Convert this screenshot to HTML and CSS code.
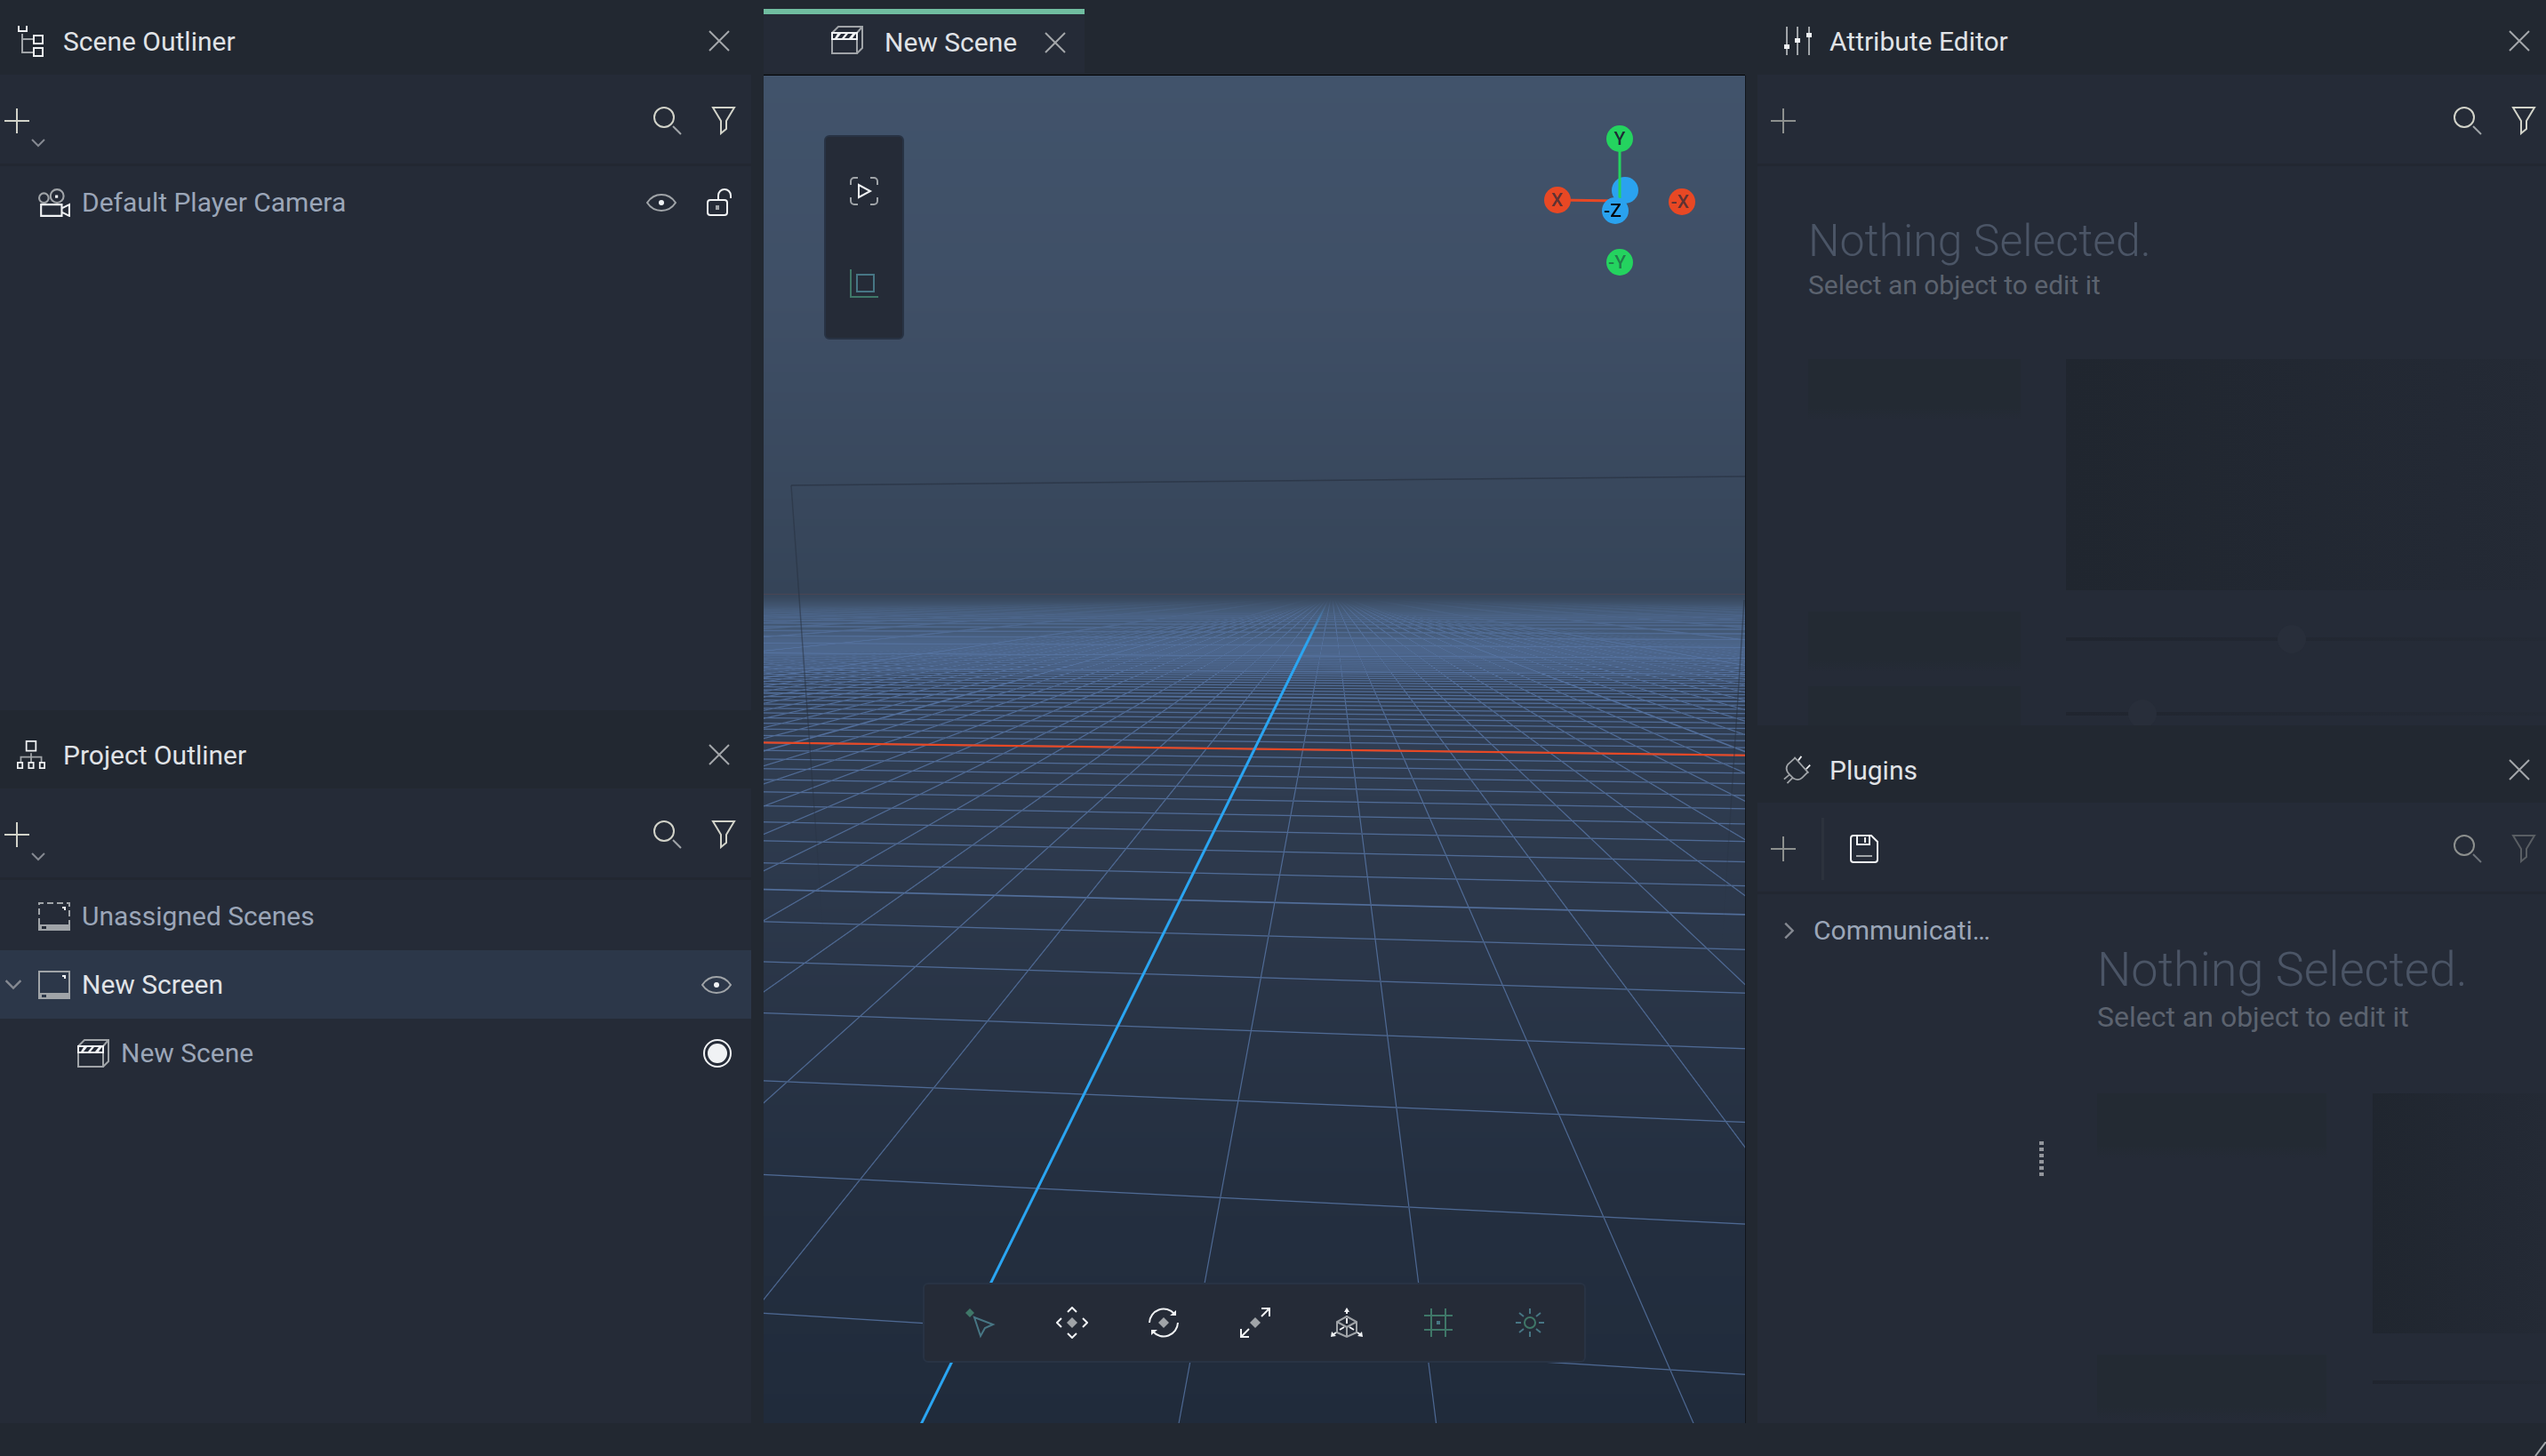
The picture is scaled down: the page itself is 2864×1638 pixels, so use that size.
FILE: index.html
```html
<!DOCTYPE html>
<html lang="en">
<head>
<meta charset="utf-8">
<title>Scene Editor</title>
<link rel="stylesheet" href="styles.css">
</head>
<body>
<svg class="sprite" aria-hidden="true">
  <symbol id="i-close" viewBox="0 0 24 24"><path d="M1 1 23 23M23 1 1 23"/></symbol>
  <symbol id="i-plus" viewBox="0 0 28 28"><path d="M14 0V28M0 14H28"/></symbol>
  <symbol id="i-caret" viewBox="0 0 16 10"><path d="M1 1 8 8 15 1"/></symbol>
  <symbol id="i-search" viewBox="0 0 32 32"><circle cx="12" cy="12" r="11"/><path class="dim" d="M22 22 31 31"/></symbol>
  <symbol id="i-filter" viewBox="0 0 28 32"><path d="M2 1H26L17 16V25L11 30V16Z"/></symbol>
  <symbol id="i-outliner" viewBox="0 0 32 36"><path d="M2 1V7H11V1M19 12H29V21H19ZM19 26H29V35H19Z"/><path class="dim" d="M6 10V31H18M6 16H18"/></symbol>
  <symbol id="i-project" viewBox="0 0 36 36"><path d="M12 1H24V13H12ZM1 28H7V35H1ZM15 28H21V35H15ZM29 28H35V35H29Z"/><path class="dim" d="M18 16V27M5 27V21H31V27"/></symbol>
  <symbol id="i-camera" viewBox="0 0 34 30"><path d="M3 17H25V29H3ZM25 21 33 17V29L25 25"/><g class="dim"><circle cx="6" cy="10" r="5"/><circle cx="20" cy="8" r="7"/></g><path class="solid" d="M18 7H21V10H18Z"/></symbol>
  <symbol id="i-eye" viewBox="0 0 36 20"><path class="dim" d="M2 10C6 4 12 1 18 1S30 4 34 10C30 16 24 19 18 19S6 16 2 10Z"/><circle class="solid" cx="18" cy="10" r="3"/></symbol>
  <symbol id="i-lock" viewBox="0 0 30 32"><rect x="2" y="13" width="22" height="17" rx="3"/><path d="M14 13V8A7 7 0 0 1 28 8V11"/><path class="solid dimfill" d="M11 19H15V24H11Z"/></symbol>
  <symbol id="i-unassigned" viewBox="0 0 36 32"><path class="dim" stroke-dasharray="7 4" d="M1 25V1H35V25"/><path class="solid dimfill" fill-rule="evenodd" d="M0 25H36V32H0ZM4 27V30H9V27Z"/><path d="M27 6H30V9"/></symbol>
  <symbol id="i-screen" viewBox="0 0 36 32"><path class="dim" d="M1 25V1H35V25"/><path class="solid dimfill" fill-rule="evenodd" d="M0 25H36V32H0ZM4 27V30H9V27Z"/><path d="M27 6H30V9"/></symbol>
  <symbol id="i-scene" viewBox="0 0 36 32"><g class="dim"><path d="M1 14V31H29V8M29 31 35 25V1H8L1 8M29 8 35 1"/></g><path class="solid" fill-rule="evenodd" d="M0 7H30V16H0ZM2 9V14H4L7 9ZM11 9 7 14H12L16 9ZM19 9 15 14H20L24 9ZM26 11 24 14H28V9Z"/></symbol>
  <symbol id="i-sliders" viewBox="0 0 32 32"><path class="dim" d="M4 0V32M16 0V32M29 0V32"/><path class="solid" d="M1 20H7V25H1ZM13 13H19V18H13ZM26 7H32V12H26Z"/></symbol>
  <symbol id="i-plug" viewBox="0 0 36 36"><path class="dim" d="M14 2 32 22M15 3 6 11C3 15 4 20 8 24L13 29C17 31 21 31 24 28L31 21M8 24 1 30M12 28 5 35"/><path d="M19 6 23 1M29 17 34 12"/></symbol>
  <symbol id="i-save" viewBox="0 0 32 32"><path d="M4 1H24L31 8V28A3 3 0 0 1 28 31H4A3 3 0 0 1 1 28V4A3 3 0 0 1 4 1ZM8 2V11H22V2M17 3V9"/><path class="dim" d="M7 24H25"/></symbol>
  <symbol id="i-frame" viewBox="0 0 32 32"><path class="dim" d="M1 9V5A4 4 0 0 1 5 1H9M23 1H27A4 4 0 0 1 31 5V9M31 23V27A4 4 0 0 1 27 31H23M9 31H5A4 4 0 0 1 1 27V23"/><path d="M10 9V23L23 16Z"/></symbol>
  <symbol id="i-bounds" viewBox="0 0 32 32"><path class="green" d="M1 0V31H32"/><path class="teal" d="M8 6H27V25H8Z"/></symbol>
  <symbol id="i-select" viewBox="0 0 36 36"><path class="greenfill" d="M6 2 11 7 6 12 1 7Z"/><path class="teal" d="M11 12 32 20 23 24 18 33Z"/></symbol>
  <symbol id="i-move" viewBox="0 0 36 36"><path d="M13 6 18 1 23 6M13 30 18 35 23 30M6 13 1 18 6 23M30 13 35 18 30 23"/><path class="solid dimfill" d="M18 12 24 18 18 24 12 18Z"/></symbol>
  <symbol id="i-rotate" viewBox="0 0 36 36"><path d="M2 18A16 16 0 0 1 30 8M34 18A16 16 0 0 1 6 28"/><path class="solid" d="M32 4V10H25ZM4 32V26H11Z"/><path class="solid dimfill" d="M18 12 24 18 18 24 12 18Z"/></symbol>
  <symbol id="i-scale" viewBox="0 0 36 36"><path d="M25 11 34 2M25 2H34V11M11 25 2 34M2 25V34H11"/><path class="solid dimfill" d="M18 12 24 18 18 24 12 18Z"/></symbol>
  <symbol id="i-local" viewBox="0 0 36 36"><path class="dim" d="M18 11 29 17V29L18 34 7 29V17ZM7 17 18 23 29 17M18 23V34"/><path d="M18 13V19M18 4V8M10 26 15 23M26 26 21 23M2 32 6 29M34 32 30 29"/><path class="solid" d="M18 1 21 6H15ZM0 34 1 28 6 33ZM36 34 35 28 30 33Z"/></symbol>
  <symbol id="i-grid" viewBox="0 0 32 32"><path class="green" d="M8 0V32M24 0V32M0 8H32M0 24H32"/><path class="tealfill" d="M14 14H18V18H14Z"/></symbol>
  <symbol id="i-light" viewBox="0 0 32 32"><circle class="green" cx="16" cy="16" r="6"/><path class="teal" d="M16 0V6M16 26V32M0 16H6M26 16H32M4 5 9 9M28 5 23 9M4 27 9 23M28 27 23 23"/></symbol>
</svg>

<main class="workspace">
  <div class="dock">
    <section class="panel scene-outliner">
      <header class="panel-head">
        <svg class="icon head-icon"><use href="#i-outliner"/></svg>
        <h2>Scene Outliner</h2>
        <button class="close" aria-label="Close Scene Outliner"><svg class="icon"><use href="#i-close"/></svg></button>
      </header>
      <div class="toolbar">
        <button class="add" aria-label="Add"><svg class="icon plus"><use href="#i-plus"/></svg><svg class="icon caret"><use href="#i-caret"/></svg></button>
        <button class="push" aria-label="Search"><svg class="icon i32"><use href="#i-search"/></svg></button>
        <button aria-label="Filter"><svg class="icon filter"><use href="#i-filter"/></svg></button>
      </div>
      <ul class="tree">
        <li class="row">
          <svg class="icon node"><use href="#i-camera"/></svg><span>Default Player Camera</span>
          <button class="push" aria-label="Toggle visibility"><svg class="icon eye"><use href="#i-eye"/></svg></button>
          <button aria-label="Lock"><svg class="icon lock"><use href="#i-lock"/></svg></button>
        </li>
      </ul>
    </section>
    <section class="panel project-outliner">
      <header class="panel-head">
        <svg class="icon head-icon"><use href="#i-project"/></svg>
        <h2>Project Outliner</h2>
        <button class="close" aria-label="Close Project Outliner"><svg class="icon"><use href="#i-close"/></svg></button>
      </header>
      <div class="toolbar">
        <button class="add" aria-label="Add"><svg class="icon plus"><use href="#i-plus"/></svg><svg class="icon caret"><use href="#i-caret"/></svg></button>
        <button class="push" aria-label="Search"><svg class="icon i32"><use href="#i-search"/></svg></button>
        <button aria-label="Filter"><svg class="icon filter"><use href="#i-filter"/></svg></button>
      </div>
      <ul class="tree">
        <li class="row"><svg class="icon node"><use href="#i-unassigned"/></svg><span>Unassigned Scenes</span></li>
        <li class="row selected">
          <button class="twisty" aria-label="Collapse"><svg class="icon dim"><use href="#i-caret"/></svg></button>
          <svg class="icon node"><use href="#i-screen"/></svg><span>New Screen</span>
          <button class="push" aria-label="Toggle visibility"><svg class="icon eye"><use href="#i-eye"/></svg></button>
        </li>
        <li class="row child">
          <svg class="icon node"><use href="#i-scene"/></svg><label for="active-scene">New Scene</label>
          <input class="push" type="radio" id="active-scene" name="active-scene" checked>
        </li>
      </ul>
    </section>
  </div>

  <section class="editor">
    <header class="tabs">
      <div class="tab">
        <svg class="icon scene"><use href="#i-scene"/></svg>
        <h2>New Scene</h2>
        <button class="close" aria-label="Close New Scene"><svg class="icon"><use href="#i-close"/></svg></button>
      </div>
    </header>
    <div class="viewport">
      <canvas id="grid"></canvas>
      <div class="tools view-tools">
        <button aria-label="Preview"><svg class="icon i32"><use href="#i-frame"/></svg></button>
        <button aria-label="Bounds"><svg class="icon i32"><use href="#i-bounds"/></svg></button>
      </div>
      <svg class="gizmo" viewBox="0 0 170 170" role="img" aria-label="Axis gizmo">
        <path d="M85 85 15 84" stroke="#e84824" stroke-width="3"/>
        <circle cx="91" cy="73" r="15" fill="#2aa2ef"/>
        <path d="M85 82V15" stroke="#24d35f" stroke-width="3"/>
        <g fill="#e84824"><circle cx="15" cy="84" r="15"/><circle cx="155" cy="86" r="15"/></g>
        <g fill="#24d35f"><circle cx="85" cy="15" r="15"/><circle cx="85" cy="154" r="15"/></g>
        <circle cx="80" cy="96" r="15" fill="#2aa2ef"/>
        <g class="axis-labels">
          <text x="15" y="91" fill="#5f3232">X</text><text x="153" y="93" fill="#5f3232">-X</text>
          <text x="85" y="22" fill="#1e2c35">Y</text><text x="82" y="161" fill="#217c4b">-Y</text>
          <text x="77" y="103" fill="#05080b">-Z</text>
        </g>
      </svg>
      <div class="tools edit-tools">
        <button aria-label="Select"><svg class="icon i36"><use href="#i-select"/></svg></button>
        <button aria-label="Move"><svg class="icon i36"><use href="#i-move"/></svg></button>
        <button aria-label="Rotate"><svg class="icon i36"><use href="#i-rotate"/></svg></button>
        <button aria-label="Scale"><svg class="icon i36"><use href="#i-scale"/></svg></button>
        <button aria-label="Local space"><svg class="icon i36"><use href="#i-local"/></svg></button>
        <button aria-label="Grid"><svg class="icon i32"><use href="#i-grid"/></svg></button>
        <button aria-label="Lighting"><svg class="icon i32"><use href="#i-light"/></svg></button>
      </div>
    </div>
  </section>

  <div class="dock right">
    <section class="panel attribute-editor">
      <header class="panel-head">
        <svg class="icon head-icon"><use href="#i-sliders"/></svg>
        <h2>Attribute Editor</h2>
        <button class="close" aria-label="Close Attribute Editor"><svg class="icon"><use href="#i-close"/></svg></button>
      </header>
      <div class="toolbar">
        <button disabled aria-label="Add"><svg class="icon plus"><use href="#i-plus"/></svg></button>
        <button class="push" aria-label="Search"><svg class="icon i32"><use href="#i-search"/></svg></button>
        <button aria-label="Filter"><svg class="icon filter"><use href="#i-filter"/></svg></button>
      </div>
      <div class="empty">
        <h3>Nothing Selected.</h3>
        <p>Select an object to edit it</p>
        <div class="ghost" aria-hidden="true">
          <i class="ghost-label"></i><i class="ghost-box"></i>
          <i class="ghost-label"></i><i class="ghost-track"><b style="left:44%"></b></i>
          <i class="ghost-label"></i><i class="ghost-track"><b style="left:13%"></b></i>
        </div>
      </div>
    </section>
    <section class="panel plugins">
      <header class="panel-head">
        <svg class="icon head-icon"><use href="#i-plug"/></svg>
        <h2>Plugins</h2>
        <button class="close" aria-label="Close Plugins"><svg class="icon"><use href="#i-close"/></svg></button>
      </header>
      <div class="toolbar">
        <button disabled aria-label="Add"><svg class="icon plus"><use href="#i-plus"/></svg></button>
        <span class="divider"></span>
        <button aria-label="Save"><svg class="icon i32 bright"><use href="#i-save"/></svg></button>
        <button class="push" disabled aria-label="Search"><svg class="icon i32"><use href="#i-search"/></svg></button>
        <button class="faint" disabled aria-label="Filter"><svg class="icon filter"><use href="#i-filter"/></svg></button>
      </div>
      <div class="split">
        <ul class="tree">
          <li class="row">
            <button class="twisty closed" aria-label="Expand"><svg class="icon"><use href="#i-caret"/></svg></button><span>Communicati…</span>
          </li>
        </ul>
        <div class="grip" role="separator" aria-orientation="vertical"></div>
        <div class="empty large">
          <h3>Nothing Selected.</h3>
          <p>Select an object to edit it</p>
          <div class="ghost" aria-hidden="true">
            <i class="ghost-label"></i><i class="ghost-box"></i>
            <i class="ghost-label"></i><i class="ghost-track"></i>
          </div>
        </div>
      </div>
    </section>
  </div>
</main>
<footer class="status"><svg class="corner" viewBox="0 0 16 16" aria-hidden="true"><path d="M4 16 16 0"/></svg></footer>
<script src="grid.js"></script>
</body>
</html>
```
FILE: styles.css
```css
:root {
  --bg: #222831;
  --panel: #252b37;
  --line: #222731;
  --text: #9ba6b8;
  --bright: #e0e3e7;
}
* { box-sizing: border-box; }
body {
  margin: 0;
  height: 100vh;
  display: flex;
  flex-direction: column;
  overflow: hidden;
  background: var(--bg);
  color: var(--text);
  font: 30px/40px Roboto, "Liberation Sans", sans-serif;
}
h2, h3, p, ul { margin: 0; padding: 0; font-weight: 400; font-size: inherit; }
ul { list-style: none; }
button { margin: 0; padding: 0; border: 0; background: none; color: inherit; display: flex; align-items: center; justify-content: center; flex: none; }
.sprite { position: absolute; width: 0; height: 0; }
.push { margin-left: auto; }

/* icons */
.icon { fill: none; stroke: #f0f2f4; stroke-width: 2; flex: none; display: block; overflow: visible; width: 24px; height: 24px; }
.dim { stroke: #a0a4a8; }
.solid { fill: #f0f2f4; stroke: none; }
.dimfill { fill: #a0a4a8; }
.green { stroke: #3f7768; }
.teal { stroke: #477684; }
.greenfill { fill: #3f7768; stroke: none; }
.tealfill { fill: #477684; stroke: none; }
.icon.i32 { width: 32px; height: 32px; }
.icon.i36 { width: 36px; height: 36px; }
.icon.plus { width: 28px; height: 28px; }
.icon.filter { width: 28px; height: 32px; }
.icon.eye { width: 36px; height: 20px; }
.icon.lock { width: 30px; height: 32px; }
.icon.scene { width: 36px; height: 32px; }

.workspace {
  flex: 1;
  min-height: 0;
  display: grid;
  grid-template-columns: minmax(0, 845fr) minmax(0, 1104fr) minmax(0, 887fr);
  gap: 14px;
}
.status { height: 37px; flex: none; display: flex; justify-content: flex-end; align-items: flex-end; }
.corner { width: 16px; height: 16px; fill: none; stroke: #a0a4a8; stroke-width: 2; }

/* docked panels */
.dock { display: flex; flex-direction: column; min-height: 0; }
.panel { display: flex; flex-direction: column; min-height: 0; overflow: hidden; background: var(--panel); }
.scene-outliner { flex: 799 1 0; }
.project-outliner { flex: 802 1 0; }
.attribute-editor { flex: 816 1 0; }
.plugins { flex: 785 1 0; }
.panel-head {
  height: 88px;
  flex: none;
  display: flex;
  align-items: center;
  gap: 18px;
  padding: 12px 24px 0 17px;
  background: var(--bg);
  color: var(--bright);
}
.panel-head h2 { padding-top: 2px; }
.panel:first-child .panel-head { height: 84px; padding-top: 8px; }
.head-icon { width: 36px; height: 36px; padding: 0 2px; }
.right .panel-head { height: 87px; padding: 12px 18px 0 27px; }
.close { margin-left: auto; }
.close .icon { stroke: #a4a7aa; }
.toolbar {
  height: 103px;
  flex: none;
  display: flex;
  align-items: center;
  gap: 33px;
  padding: 3px 17px 0 5px;
  border-bottom: 3px solid var(--line);
}
.toolbar .icon { stroke: #d2d3c9; }
.toolbar .icon.bright { stroke: #f0f2f4; }
.add { display: grid; grid-template-columns: 28px 20px; }
.add .caret { width: 16px; height: 10px; align-self: end; justify-self: center; margin: 0 0 -16px 0; stroke: #858991; }
.right .toolbar { padding: 3px 11px 0 15px; }
.toolbar button:disabled { opacity: 0.6; }
.toolbar button.faint:disabled { opacity: 0.3; }
.plugins .toolbar { gap: 29px; }
.plugins .toolbar .push { margin-right: 4px; }
.divider { width: 3px; height: 70px; background: #2c323d; }

/* trees */
.tree { flex: 1; padding-top: 2px; }
.row { height: 77px; display: flex; align-items: center; gap: 13px; padding: 0 21px 0 43px; }
.row .node { width: 36px; height: 32px; }
.row .lock { margin-left: 19px; }
.row.selected { background: #2c3749; color: var(--bright); padding-left: 4px; }
.row.selected .twisty { width: 22px; margin-right: 4px; }
.row.child { padding-left: 87px; }
.twisty { width: 24px; }
.twisty .icon { width: 20px; height: 12px; stroke: #858991; }
.twisty.closed .icon { transform: rotate(-90deg); }
input[type="radio"] {
  appearance: none;
  flex: none;
  width: 32px;
  height: 32px;
  margin: 0 1px 0 auto;
  border: 2px solid #f0f2f4;
  border-radius: 50%;
  padding: 3px;
  background: #f0f2f4 content-box;
}

/* centre editor */
.editor { display: flex; flex-direction: column; min-width: 0; }
.tabs { height: 85px; flex: none; padding-top: 10px; border-bottom: 1px solid #000; }
.tab {
  width: 361px;
  height: 72px;
  display: flex;
  align-items: center;
  padding: 0 21px 3px 76px;
  border-top: 6px solid #70bda0;
  background: var(--panel);
  color: var(--bright);
}
.tab .scene { margin-bottom: 6px; }
.tab h2 { margin-left: 24px; }
.viewport { flex: 1; position: relative; min-height: 0; box-shadow: 1px 0 #11151b; background: #364659; }
.viewport canvas { position: absolute; inset: 0; width: 100%; height: 100%; }
.tools { position: absolute; display: flex; background: var(--panel); border: 2px solid #283344; border-radius: 6px; }
.view-tools { left: 68px; top: 67px; flex-direction: column; padding: 9px 0; }
.view-tools button { width: 86px; height: 104px; }
.edit-tools { left: 50%; bottom: 68px; transform: translateX(-50%); padding: 0 10px 0 11px; }
.edit-tools button { width: 103px; height: 86px; }
.gizmo { position: absolute; right: 56px; top: 56px; width: 170px; height: 170px; }
.axis-labels { font: 500 21px Roboto, sans-serif; text-anchor: middle; }

/* empty states */
.empty { flex: 1; min-width: 0; overflow: hidden; padding: 52px 0 0 57px; color: #5c636f; white-space: nowrap; }
.empty h3 { font-size: 50px; line-height: 64px; font-weight: 300; color: #4b5566; }
.empty p { font-size: 30px; line-height: 36px; }
.ghost { display: grid; grid-template-columns: 239px 1fr; column-gap: 51px; row-gap: 16px; margin-top: 65px; }
.ghost-label { height: 68px; background: linear-gradient(#232a33 80%, #252b37); }
.ghost-box { height: 260px; margin-bottom: 8px; background: linear-gradient(90deg, #20262f, #232934 80%, #242a35); }
.ghost-track { position: relative; height: 4px; margin-top: 29px; background: linear-gradient(90deg, #20252f, #242a35); }
.ghost-track b { position: absolute; top: -14px; width: 32px; height: 32px; border-radius: 50%; background: #282e3a; }
.split { flex: 1; min-height: 0; display: flex; }
.split .tree { flex: 0 0 317px; }
.split .row { gap: 15px; padding: 0 0 0 24px; }
.grip { flex: none; align-self: center; width: 5px; height: 40px; background: repeating-linear-gradient(#93969c 0 4px, transparent 4px 7px); }
.large { padding: 51px 0 0 60px; }
.large h3 { font-size: 54px; line-height: 68px; }
.large p { font-size: 32px; line-height: 38px; }
.large .ghost { grid-template-columns: 258px 1fr; column-gap: 52px; margin-top: 67px; }
.large .ghost-label { height: 73px; }
.large .ghost-box { height: 270px; }
```
FILE: grid.js
```js
// Infinite ground grid, evaluated per pixel from the camera projection.
const canvas = document.getElementById('grid');
const BASE_W = 1104, BASE_H = 1516;
const HORIZON = 582, VANISH_X = 639;

const clamp = (v, a, b) => Math.min(b, Math.max(a, v));
const smooth = (a, b, v) => { const t = clamp((v - a) / (b - a), 0, 1); return t * t * (3 - 2 * t); };
const mix = (a, b, t) => a + (b - a) * t;

const sky = [[0, 65, 83, 107], [250, 63, 79, 102], [582, 53, 68, 88], [700, 49, 63, 84], [920, 44, 56, 75], [1250, 36, 47, 64], [1516, 32, 43, 59]];
function backdrop(y) {
  let k = 1;
  while (k < sky.length - 1 && y > sky[k][0]) k++;
  const a = sky[k - 1], b = sky[k], t = clamp((y - a[0]) / (b[0] - a[0]), 0, 1);
  return [mix(a[1], b[1], t), mix(a[2], b[2], t), mix(a[3], b[3], t)];
}
function line(v, grad, width, dense) {
  const sharp = clamp(width / 2 + 0.5 - Math.abs(v - Math.round(v)) / grad, 0, 1);
  return mix(sharp, Math.min(1, width * grad) * dense, smooth(0.4, 0.9, grad));
}
function draw() {
  const w = canvas.width = canvas.clientWidth, h = canvas.height = canvas.clientHeight;
  const ctx = canvas.getContext('2d');
  const img = ctx.createImageData(w, h), s = h / BASE_H, ox = (w - BASE_W * s) / 2;
  for (let py = 0; py < h; py++) {
    const y = (py + 0.5) / s, base = backdrop(y), v = y - HORIZON, inv = 1 / v;
    // The haze reaches slightly above the horizon
    const fog = smooth(-2, 22, v) * 0.45 * (1 - smooth(55, 110, v));
    for (let px = 0; px < w; px++) {
      const x = (px + 0.5 - ox) / s, o = (py * w + px) * 4;
      let [r, g, b] = base;
      r = mix(r, 84, fog); g = mix(g, 113, fog); b = mix(b, 150, fog);
      if (v > 0.5) {
        const d = (x + 12988) / 12988;
        const J = (0.005938 - d * inv) / 0.000294;
        const gJ = Math.hypot(d * inv * inv, inv / 12988) / 0.000294 / s;
        const I = ((x - VANISH_X) * inv + 0.4939) / 0.30985;
        const gI = Math.hypot(inv, (x - VANISH_X) * inv * inv) / 0.30985 / s;
        const minor = Math.max(line(J, gJ, 1.3, 0.6) * (1 - smooth(0.8, 2.2, gJ)), line(I, gI, 1.2, 0.5) * (1 - smooth(0.2, 0.7, gI)));
        const major = Math.max(line(J / 10, gJ / 10, 1.7, 0.3), line(I / 10, gI / 10, 1.6, 0.3));
        const a = smooth(4, 30, v) * Math.max(0.8 * minor, 0.85 * major * mix(0.5, 1, smooth(20, 70, v)));
        r = mix(r, 88, a); g = mix(g, 119, a); b = mix(b, 168, a);
        const red = clamp(1.6 - Math.abs(J) / gJ, 0, 1);
        r = mix(r, 232, red); g = mix(g, 72, red); b = mix(b, 36, red);
        const blue = clamp(2 - Math.abs(I) / gI, 0, 1) * smooth(12, 62, v);
        r = mix(r, 42, blue); g = mix(g, 165, blue); b = mix(b, 242, blue);
      }
      img.data[o] = r; img.data[o + 1] = g; img.data[o + 2] = b; img.data[o + 3] = 255;
    }
  }
  ctx.putImageData(img, 0, 0);

  // Camera frame
  ctx.setTransform(s, 0, 0, s, ox, 0);
  ctx.lineWidth = 1.5;
  ctx.strokeStyle = 'rgba(38,48,63,.65)';
  ctx.beginPath(); ctx.moveTo(1104, 451); ctx.lineTo(31, 461); ctx.stroke();
  const fade = ctx.createLinearGradient(0, 461, 0, 980);
  fade.addColorStop(0, 'rgba(38,48,63,.55)');
  fade.addColorStop(0.6, 'rgba(38,48,63,.5)');
  fade.addColorStop(1, 'rgba(38,48,63,0)');
  ctx.strokeStyle = fade;
  ctx.beginPath(); ctx.moveTo(31, 461); ctx.lineTo(68, 980); ctx.moveTo(1103, 590); ctx.lineTo(1078, 980); ctx.stroke();
}
draw();
addEventListener('resize', draw);
```
